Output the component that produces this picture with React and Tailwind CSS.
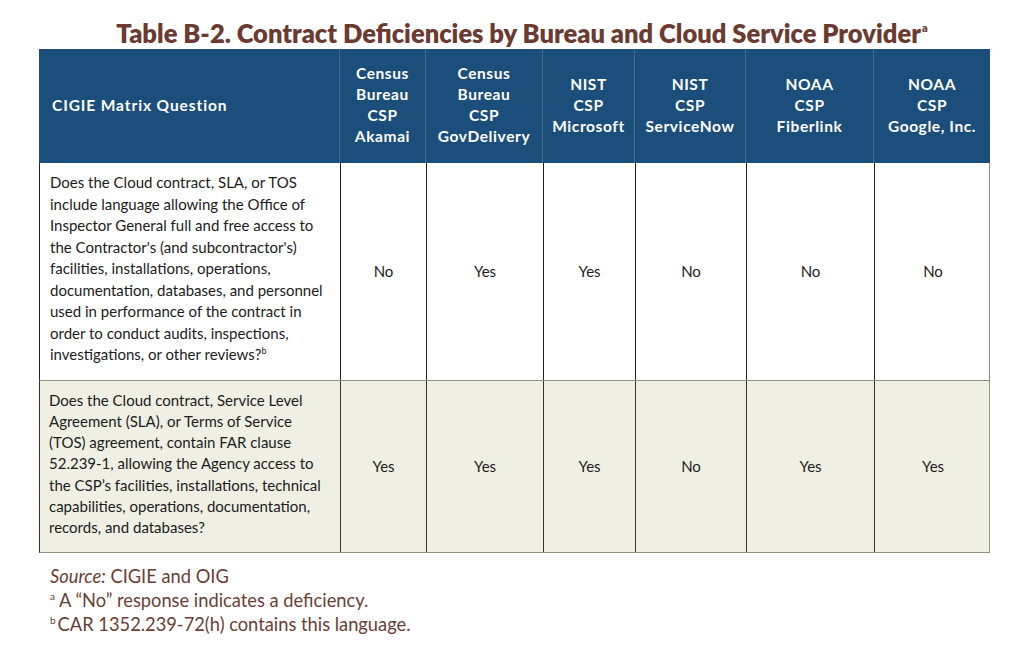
import React from "react";

const cols = "grid grid-cols-[300px_86px_117px_92px_111px_128px_117px]";

const headers = [
  ["Census", "Bureau", "CSP", "Akamai"],
  ["Census", "Bureau", "CSP", "GovDelivery"],
  ["NIST", "CSP", "Microsoft"],
  ["NIST", "CSP", "ServiceNow"],
  ["NOAA", "CSP", "Fiberlink"],
  ["NOAA", "CSP", "Google, Inc."],
];

const q1 = [
  "Does the Cloud contract, SLA, or TOS",
  "include language allowing the Office of",
  "Inspector General full and free access to",
  "the Contractor's (and subcontractor's)",
  "facilities, installations, operations,",
  "documentation, databases, and personnel",
  "used in performance of the contract in",
  "order to conduct audits, inspections,",
];

const q2 = [
  "Does the Cloud contract, Service Level",
  "Agreement (SLA), or Terms of Service",
  "(TOS) agreement, contain FAR clause",
  "52.239-1, allowing the Agency access to",
  "the CSP\u2019s facilities, installations, technical",
  "capabilities, operations, documentation,",
  "records, and databases?",
];

const a1 = ["No", "Yes", "Yes", "No", "No", "No"];
const a2 = ["Yes", "Yes", "Yes", "No", "Yes", "Yes"];

export default function App() {
  return (
    <div className="w-[1036px] h-[659px] bg-white font-['Lato',sans-serif] text-[#1c1c1c]">
      <div className="h-[49px] flex items-end justify-center pl-[8px] pb-[2px]">
        <h1 className="text-[25.5px] leading-[28px] font-extrabold text-[#6b3a30] tracking-[0px] whitespace-nowrap">
          Table B-2. Contract Deficiencies by Bureau and Cloud Service Provider
          <sup className="text-[11px] relative -top-[11px] ml-[1px]">a</sup>
        </h1>
      </div>

      <div className="ml-[39px] w-[951px]">
        <div className={`${cols} h-[114px] bg-[#1b4e7a] text-white font-bold text-[15.5px] leading-[21px] tracking-[0.6px]`}>
          <div className="flex items-center pl-[13px] pb-[2px] tracking-[0.9px]">CIGIE Matrix Question</div>
          {headers.map((h, i) => (
            <div key={i} className="flex flex-col items-center justify-center border-l border-[#3f6a86] pb-[2px]">
              {h.map((l, j) => (
                <span key={j} className="whitespace-nowrap">{l}</span>
              ))}
            </div>
          ))}
        </div>

        <div className={`${cols} bg-white border-l border-[#222] border-r border-r-[#888]`}>
          <div className="pl-[10px] pt-[9px] pb-[14px] text-[15px] leading-[21.5px]">
            {q1.map((l, i) => (
              <div key={i} className="whitespace-nowrap">{l}</div>
            ))}
            <div className="whitespace-nowrap">
              investigations, or other reviews?
              <sup className="text-[9px] relative -top-[6px]">b</sup>
            </div>
          </div>
          {a1.map((a, i) => (
            <div key={i} className="flex items-center justify-center border-l border-[#222] text-[15px]">
              {a}
            </div>
          ))}
        </div>

        <div className={`${cols} bg-[#efefe3] border border-[#8d977d] border-l-[#333]`}>
          <div className="pl-[9px] pt-[9px] pb-[13px] text-[15px] leading-[21.3px]">
            {q2.map((l, i) => (
              <div key={i} className="whitespace-nowrap">{l}</div>
            ))}
          </div>
          {a2.map((a, i) => (
            <div key={i} className="flex items-center justify-center border-l border-[#333] text-[15px]">
              {a}
            </div>
          ))}
        </div>
      </div>

      <div className="ml-[50px] mt-[11px] text-[18.3px] leading-[24px] text-[#6b3e35]">
        <div>
          <em>Source:</em> CIGIE and OIG
        </div>
        <div>
          <sup className="text-[10px] relative -top-[7px] mr-[4px]">a</sup>A “No” response indicates a deficiency.
        </div>
        <div>
          <sup className="text-[10px] relative -top-[7px] mr-[2px]">b</sup>CAR 1352.239-72(h) contains this language.
        </div>
      </div>
    </div>
  );
}
